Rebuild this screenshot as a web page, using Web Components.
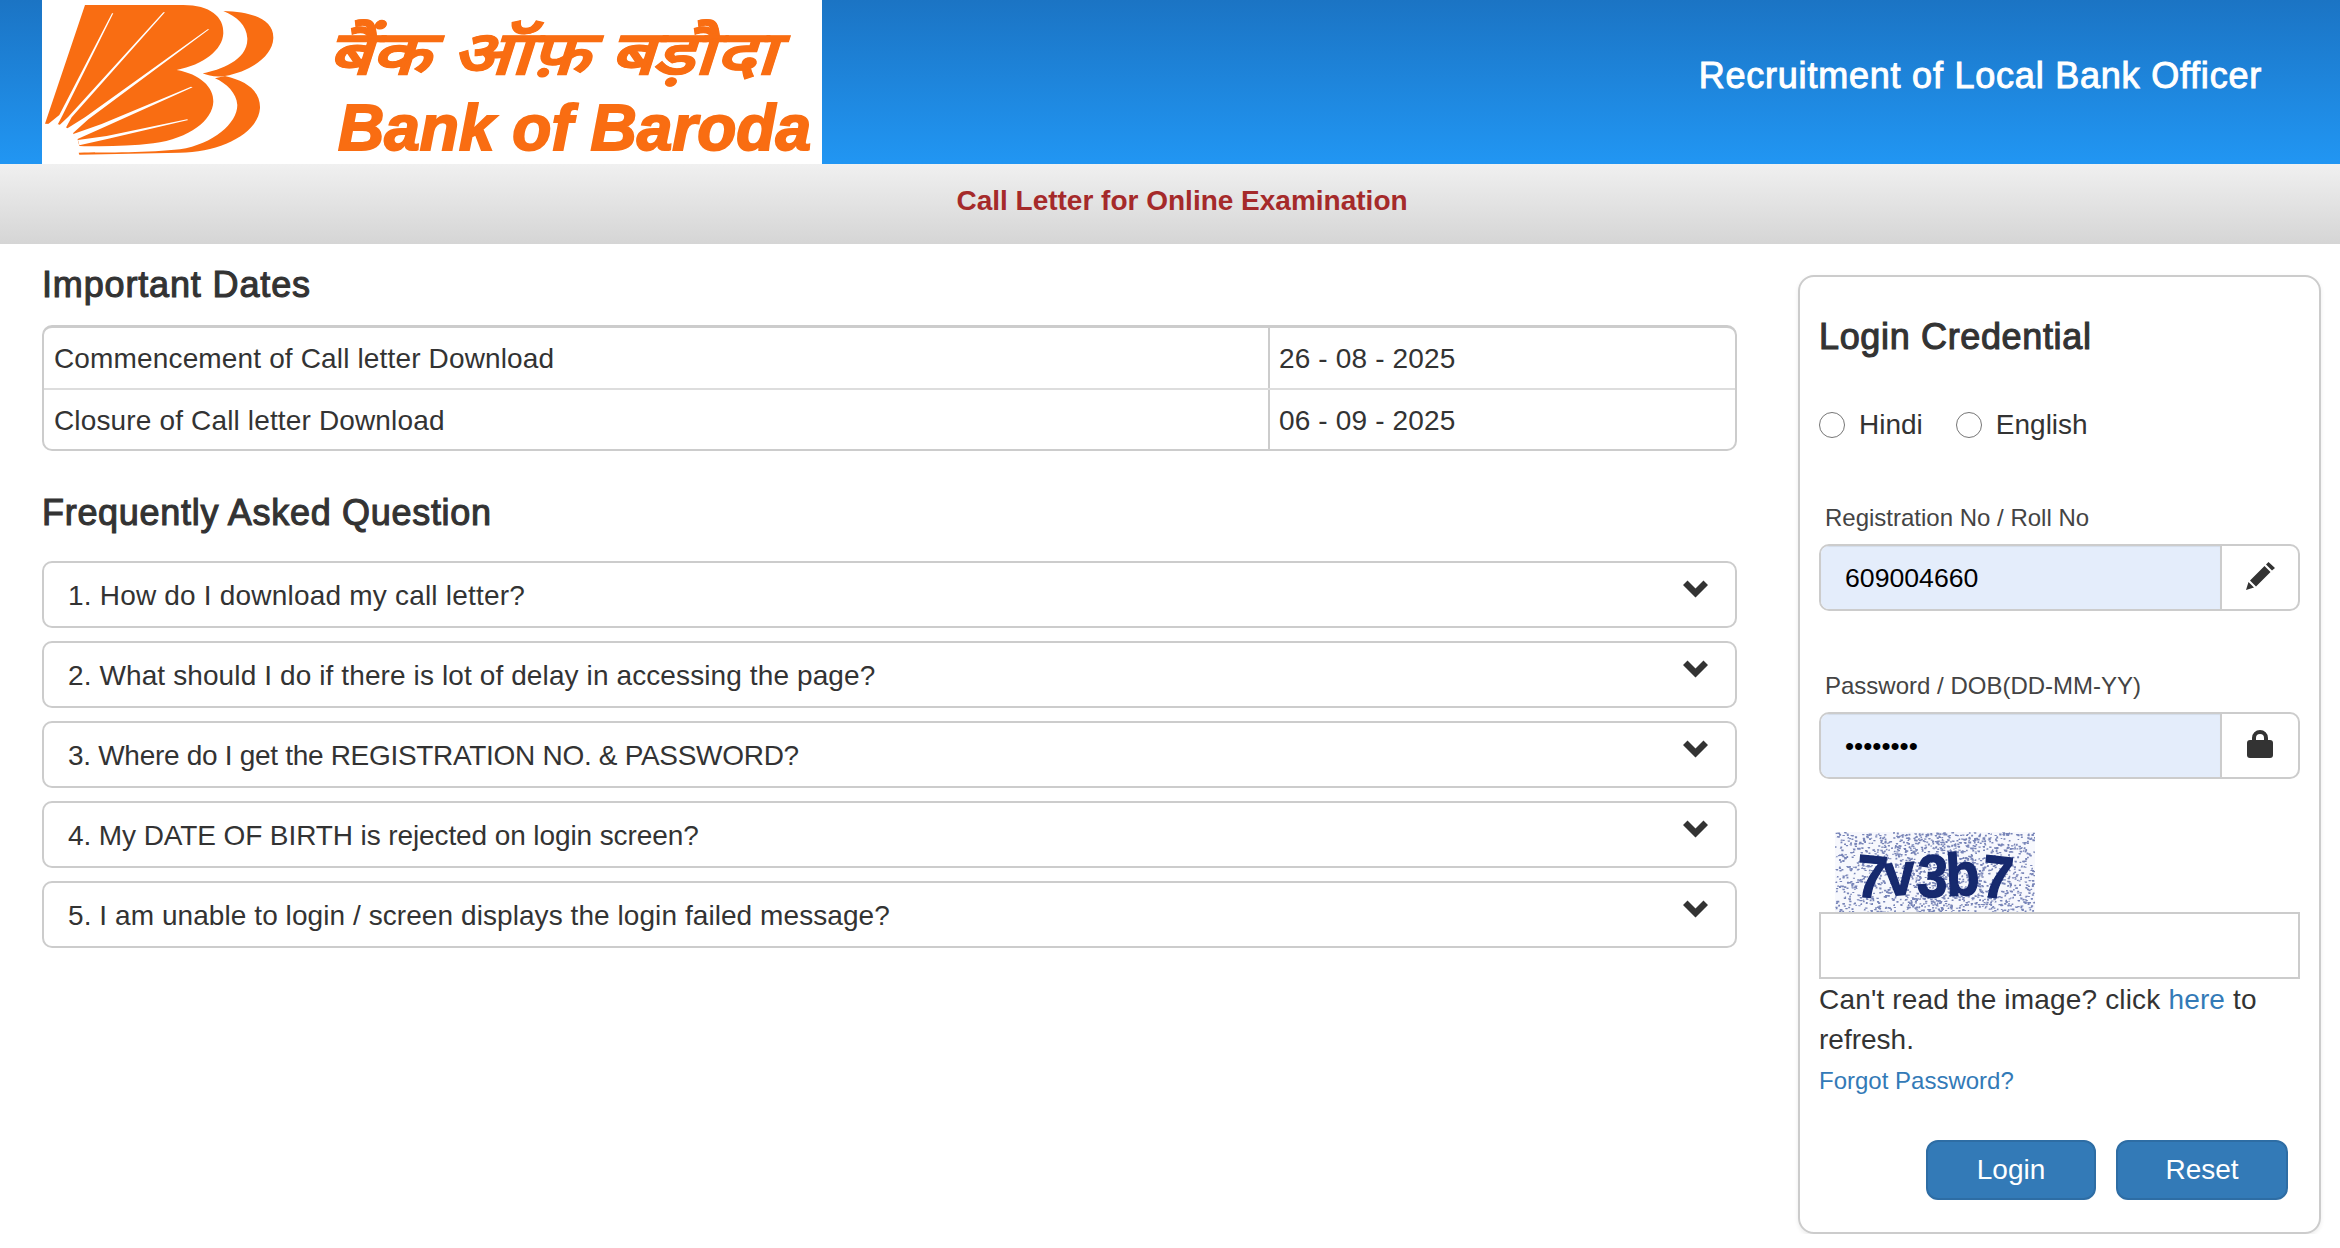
<!DOCTYPE html>
<html lang="en">
<head>
<meta charset="utf-8">
<title>Call Letter for Online Examination</title>
<style>
  html, body { margin: 0; padding: 0; background: #fff; }
  body { font-family: "Liberation Sans", Arial, sans-serif; font-size: 28px; line-height: 40px; color: #333; }
</style>
</head>
<body>
<app-header>Recruitment of Local Bank Officer</app-header>
<sub-banner>Call Letter for Online Examination</sub-banner>
<page-body>
  <div slot="left">
    <section-title>Important Dates</section-title>
    <dates-table>
      <date-row value="26 - 08 - 2025">Commencement of Call letter Download</date-row>
      <date-row value="06 - 09 - 2025">Closure of Call letter Download</date-row>
    </dates-table>
    <section-title class="faq">Frequently Asked Question</section-title>
    <faq-list>
      <faq-item style="letter-spacing:.2px">1. How do I download my call letter?</faq-item>
      <faq-item style="letter-spacing:.11px">2. What should I do if there is lot of delay in accessing the page?</faq-item>
      <faq-item style="letter-spacing:-.3px">3. Where do I get the REGISTRATION NO. &amp; PASSWORD?</faq-item>
      <faq-item style="letter-spacing:-.1px">4. My DATE OF BIRTH is rejected on login screen?</faq-item>
      <faq-item style="letter-spacing:.07px">5. I am unable to login / screen displays the login failed message?</faq-item>
    </faq-list>
  </div>
  <login-card slot="right"></login-card>
</page-body>

<script>
class BobLogo extends HTMLElement {
  connectedCallback() {
    this.attachShadow({ mode: 'open' });
    this.render();
  }

  render() {
    this.shadowRoot.innerHTML = `
    <style>
      :host { display: block; width: 780px; height: 164px; background: #fff; flex: none; }
      svg { display: block; }
      .t { fill: #f96d12; stroke: #f96d12; font-family: "Liberation Sans", sans-serif; font-weight: 700; font-style: italic; }
    </style>
    <svg width="780" height="164" viewBox="0 0 780 164">
      <g transform="translate(-2 0) scale(.3333)">
        <path fill="#f96d12" d="M135 15 L430 15 C510 15 552 50 550 100 C548 150 490 195 410 210 C480 222 522 262 520 305 C518 360 450 415 340 430 C260 440 180 440 118 438 L112 415 L98 398 L78 382 L55 373 L15 371 Z"/>
        <g fill="#fff">
          <path d="M220 40 L216 40 L58 345 L22 374 L52 376 L68 345 Z"/>
          <path d="M375 37 L370 37 L85 350 L58 376 L76 386 L95 352 Z"/>
          <path d="M508 88 L503 88 L135 352 L80 386 L97 401 L145 358 Z"/>
          <path d="M458 262 L453 260 L185 372 L100 402 L111 418 L195 380 Z"/>
          <path d="M445 360 L441 358 L200 408 L114 420 L118 436 L205 416 Z"/>
        </g>
        <path fill="#f96d12" d="M550 33 C640 35 702 60 700 115 C698 170 630 215 555 228 C530 232 505 228 488 220 C540 210 625 180 622 115 C620 75 590 50 550 33 Z"/>
        <path fill="#f96d12" d="M555 228 C630 245 662 280 660 325 C655 400 540 458 420 458 L118 464 L116 458 C200 458 330 458 420 448 C520 432 592 370 592 315 C590 280 560 250 525 235 Z"/>
      </g>
      <text class="t" x="286" y="74" font-size="60" stroke-width=".8" textLength="448" lengthAdjust="spacingAndGlyphs">बैंक ऑफ़ बड़ौदा</text>
      <text class="t" x="296" y="150" font-size="64" stroke-width="2">Bank of Baroda</text>
    </svg>`;
  }
}

class AppHeader extends HTMLElement {
  connectedCallback() {
    this.attachShadow({ mode: 'open' });
    this.render();
  }

  render() {
    this.shadowRoot.innerHTML = `
    <style>
      :host {
        display: flex;
        height: 164px;
        padding-left: 42px;
        background: linear-gradient(#1b74c4, #2196f3);
      }
      .title {
        margin: 56px 78px 0 auto;
        color: #fff;
        font-size: 36px;
        line-height: 40px;
        letter-spacing: .78px;
        -webkit-text-stroke: 1px #fff;
      }
    </style>
    <bob-logo></bob-logo>
    <div class="title"><slot></slot></div>`;
  }
}

class SubBanner extends HTMLElement {
  connectedCallback() {
    this.attachShadow({ mode: 'open' });
    this.shadowRoot.innerHTML = `
    <style>
      :host {
        display: block;
        height: 80px;
        box-sizing: border-box;
        padding: 17px 0 0 24px;
        text-align: center;
        font-weight: 700;
        color: #a52a2a;
        background: linear-gradient(#f0f0f0, #d5d5d5);
      }
    </style>
    <slot></slot>`;
  }
}

class PageBody extends HTMLElement {
  connectedCallback() {
    this.attachShadow({ mode: 'open' });
    this.shadowRoot.innerHTML = `
    <style>
      :host { display: flex; gap: 61px; padding: 0 19px 0 42px; }
      .left { flex: 0 0 1695px; padding-top: 21px; }
      .right { flex: 0 0 523px; padding-top: 31px; }
    </style>
    <div class="left"><slot name="left"></slot></div>
    <div class="right"><slot name="right"></slot></div>`;
  }
}

class SectionTitle extends HTMLElement {
  connectedCallback() {
    this.attachShadow({ mode: 'open' });
    this.shadowRoot.innerHTML = `
    <style>
      :host {
        display: block;
        font-size: 36px;
        line-height: 40px;
        letter-spacing: .85px;
        -webkit-text-stroke: 1.1px #333;
        color: #333;
        margin-bottom: 20px;
      }
      :host(.faq) { margin: 42px 0 28px; letter-spacing: .7px; }
    </style>
    <slot></slot>`;
  }
}

class DatesTable extends HTMLElement {
  connectedCallback() {
    this.attachShadow({ mode: 'open' });
    this.shadowRoot.innerHTML = `
    <style>
      :host {
        display: block;
        border: 2px solid #ccc;
        border-top-width: 3px;
        border-radius: 10px;
        overflow: hidden;
        letter-spacing: .15px;
      }
      ::slotted(date-row:last-child) { --bottom: 8px; --line: 0; }
    </style>
    <slot></slot>`;
  }
}

class DateRow extends HTMLElement {
  connectedCallback() {
    this.attachShadow({ mode: 'open' });
    this.shadowRoot.innerHTML = `
    <style>
      :host {
        display: grid;
        grid-template-columns: 1224px 1fr;
        border-bottom: var(--line, 2px) solid #ddd;
      }
      .cell { padding: 11px 10px var(--bottom, 9px); }
      .value { border-left: 2px solid #ccc; padding-left: 9px; }
    </style>
    <div class="cell"><slot></slot></div>
    <div class="cell value">${this.getAttribute('value')}</div>`;
  }
}

class FaqList extends HTMLElement {
  connectedCallback() {
    this.attachShadow({ mode: 'open' });
    this.shadowRoot.innerHTML = `
    <style>
      :host { display: flex; flex-direction: column; gap: 13px; }
    </style>
    <slot></slot>`;
  }
}

class FaqItem extends HTMLElement {
  connectedCallback() {
    this.attachShadow({ mode: 'open' });
    this.shadowRoot.innerHTML = `
    <style>
      :host {
        display: flex;
        justify-content: space-between;
        box-sizing: border-box;
        height: 67px;
        padding: 13px 27px 0 24px;
        border: 2px solid #ccc;
        border-radius: 10px;
      }
      svg { display: block; margin-top: 4px; flex: none; }
    </style>
    <div><slot></slot></div>
    <svg width="25" height="18" viewBox="0 0 25 18"><path fill="#333" d="M0 5 L4.5 .5 L12.5 8.5 L20.5 .5 L25 5 L12.5 17.5 Z"/></svg>`;
  }
}

class InputGroup extends HTMLElement {
  connectedCallback() {
    this.attachShadow({ mode: 'open' });
    this.shadowRoot.innerHTML = `
    <style>
      :host { display: block; }
      label {
        display: block;
        margin: 0 0 9px 6px;
        font-size: 24px;
        line-height: 34px;
        color: #444;
      }
      .group {
        display: flex;
        box-sizing: border-box;
        height: 67px;
        border: 2px solid #ccc;
        border-radius: 10px;
        overflow: hidden;
      }
      .field {
        flex: 1;
        padding-left: 24px;
        font-size: 26.67px;
        line-height: 65px;
        color: #000;
        background: #e4edfb;
        box-shadow: inset 0 1px 1px rgba(0, 0, 0, .075);
      }
      .addon {
        display: flex;
        align-items: center;
        justify-content: center;
        flex: 0 0 76px;
        border-left: 2px solid #ccc;
      }
    </style>
    <label><slot name="label"></slot></label>
    <div class="group">
      <div class="field"><slot name="value"></slot></div>
      <div class="addon"><slot name="icon"></slot></div>
    </div>`;
  }
}

class CaptchaImage extends HTMLElement {
  connectedCallback() {
    this.attachShadow({ mode: 'open' });
    this.render();
  }

  // speckle background, denser in the middle
  noise() {
    let seed = 7331;
    const rnd = () => {
      seed = (seed * 16807) % 2147483647;
      return seed / 2147483647;
    };
    let d = '';
    for (let i = 0; i < 2300; i++) {
      const x = rnd() * 200;
      const y = rnd() * 80;
      const mid = 1 - Math.abs(x - 105) / 125;
      if (rnd() > 0.4 + mid * 0.5) continue;
      d += `M${x.toFixed(1)} ${y.toFixed(1)}h${(1 + rnd() * 2).toFixed(1)}v${(1 + rnd()).toFixed(1)}h-2z`;
    }
    return d;
  }

  render() {
    this.shadowRoot.innerHTML = `
    <style>
      :host { display: block; width: 200px; height: 80px; margin-left: 16px; }
      svg { display: block; }
      text { font-family: "Liberation Sans", sans-serif; font-weight: 700; font-size: 60px; fill: #14296e; stroke: #14296e; stroke-width: 1.4px; }
    </style>
    <svg width="200" height="80" viewBox="0 0 200 80">
      <defs><filter id="soft"><feGaussianBlur stdDeviation=".7"/></filter></defs>
      <rect width="200" height="80" fill="#f7f8fd"/>
      <path d="${this.noise()}" fill="#7885b8" filter="url(#soft)"/>
      <text x="20" y="64" textLength="156" lengthAdjust="spacingAndGlyphs" rotate="5 -4 3 -3 6" filter="url(#soft)">7v3b7</text>
    </svg>`;
  }
}

class LoginCard extends HTMLElement {
  connectedCallback() {
    this.attachShadow({ mode: 'open' });
    this.render();
  }

  render() {
    this.shadowRoot.innerHTML = `
    <style>
      :host {
        display: block;
        box-sizing: border-box;
        height: 959px;
        padding: 40px 19px 0 19px;
        border: 2px solid #ccc;
        border-radius: 16px;
        box-shadow: 0 2px 4px rgba(0, 0, 0, .08);
      }
      h4 {
        margin: 0 0 48px;
        font-size: 36px;
        font-weight: 400;
        line-height: 40px;
        letter-spacing: .65px;
        -webkit-text-stroke: 1.1px #333;
        color: #333;
      }
      .radios { display: flex; align-items: center; margin-bottom: 56px; }
      .radios input { width: 26px; height: 26px; margin: 0 14px 0 0; accent-color: #767676; }
      .radios span { margin-right: 33px; }
      input-group + input-group { margin-top: 58px; }
      captcha-image { margin-top: 53px; }
      .captcha {
        display: block;
        box-sizing: border-box;
        width: 100%;
        height: 67px;
        margin: 0;
        border: 2px solid #ccc;
        border-radius: 0;
        background: #fff;
        outline: 0;
      }
      a { color: #337ab7; text-decoration: none; }
      .help { padding-top: 1px; }
      .spaced { letter-spacing: .17px; }
      .forgot { display: block; margin-top: 4px; font-size: 24px; line-height: 34px; }
      .actions { display: flex; justify-content: flex-end; gap: 20px; margin: 42px 12px 0 0; }
      button {
        height: 60px;
        padding: 0;
        border: 2px solid #2e6da4;
        border-radius: 12px;
        background: #337ab7;
        color: #fff;
        font: inherit;
      }
      .login { width: 170px; }
      .reset { width: 172px; }
      svg { display: block; }
    </style>
    <h4>Login Credential</h4>
    <div class="radios">
      <input type="radio" name="lang"><span>Hindi</span>
      <input type="radio" name="lang"><span>English</span>
    </div>
    <input-group>
      <span slot="label">Registration No / Roll No</span>
      <span slot="value">609004660</span>
      <svg slot="icon" width="29" height="28" viewBox="0 0 29 28" fill="#333" style="margin-top:-4px">
        <path d="M0 28 L2.5 20 L8 25.5 Z M4 18.5 L18.5 4 L24.5 10 L10 24.5 Z M20 2.5 L22.5 0 L29 6 L26 8.5 Z"/>
      </svg>
    </input-group>
    <input-group>
      <span slot="label">Password / DOB(DD-MM-YY)</span>
      <span slot="value" style="font-size:26px">••••••••</span>
      <svg slot="icon" width="26" height="28" viewBox="0 0 26 28" fill="#333" style="margin-top:-4px">
        <path d="M5 11 V8 A8 8 0 0 1 21 8 V11 H17 V8 A4 4 0 0 0 9 8 V11 Z"/>
        <rect y="10" width="26" height="18" rx="3"/>
      </svg>
    </input-group>
    <captcha-image></captcha-image>
    <input class="captcha" type="text">
    <div class="help"><span class="spaced">Can't read the image? click <a href="#">here</a> to</span> refresh.</div>
    <a class="forgot" href="#">Forgot Password?</a>
    <div class="actions">
      <button class="login">Login</button>
      <button class="reset">Reset</button>
    </div>`;
  }
}

customElements.define('bob-logo', BobLogo);
customElements.define('app-header', AppHeader);
customElements.define('sub-banner', SubBanner);
customElements.define('page-body', PageBody);
customElements.define('section-title', SectionTitle);
customElements.define('dates-table', DatesTable);
customElements.define('date-row', DateRow);
customElements.define('faq-list', FaqList);
customElements.define('faq-item', FaqItem);
customElements.define('input-group', InputGroup);
customElements.define('captcha-image', CaptchaImage);
customElements.define('login-card', LoginCard);
</script>
</body>
</html>
